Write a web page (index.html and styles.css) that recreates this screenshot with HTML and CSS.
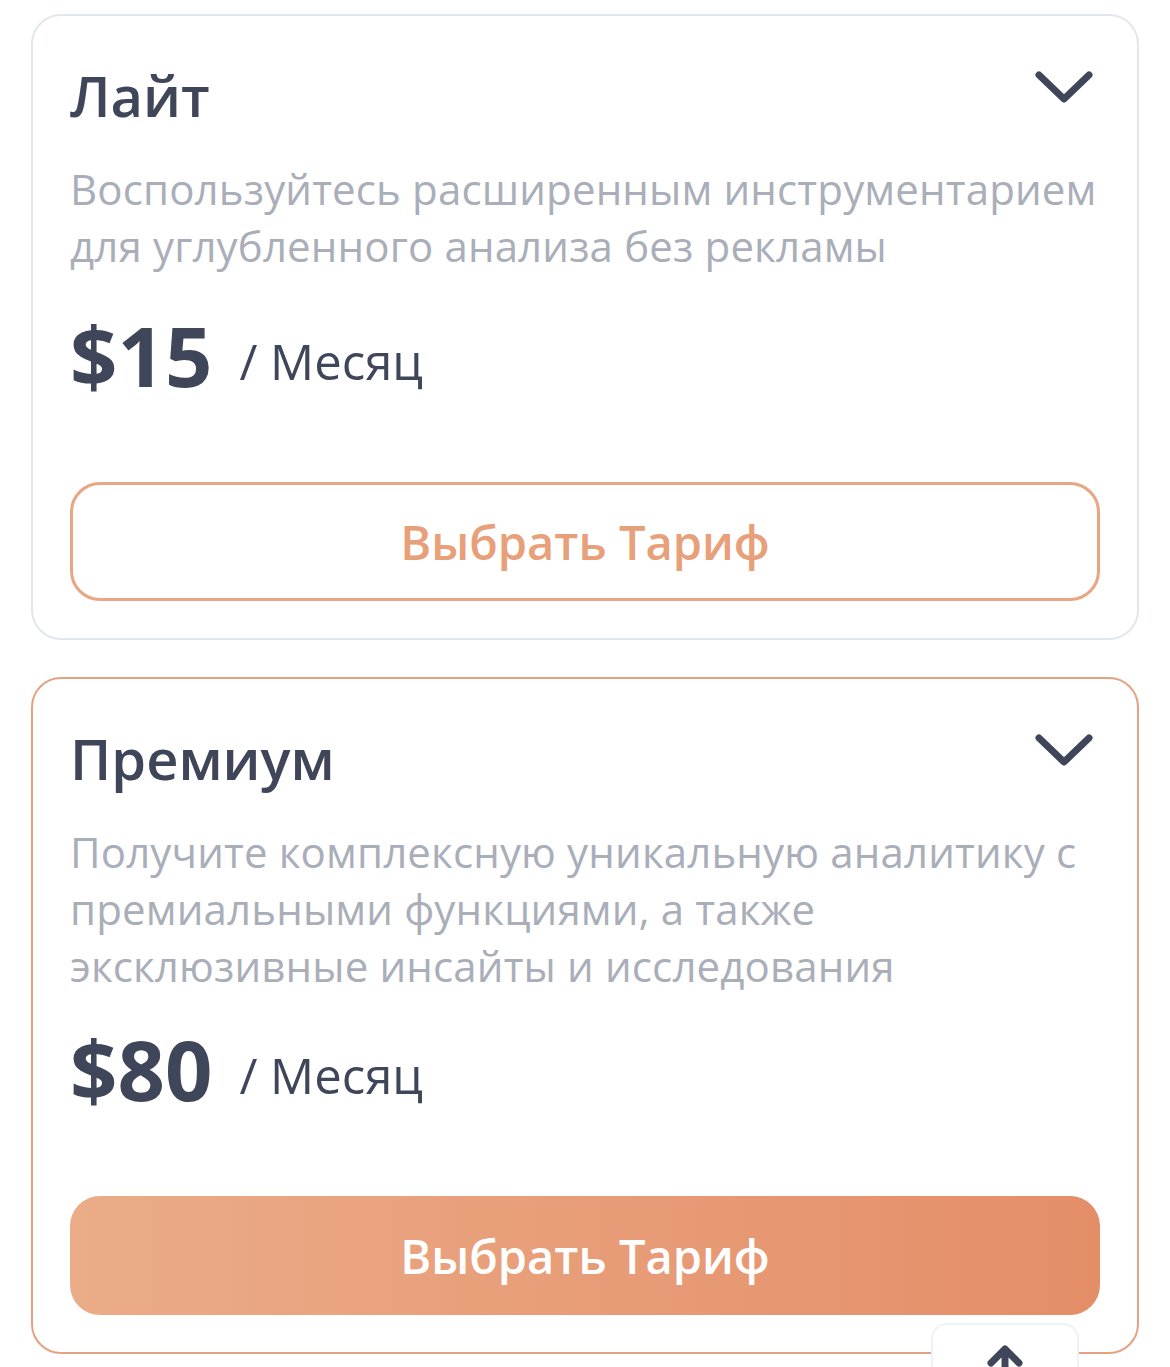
FILE: index.html
```html
<!DOCTYPE html>
<html lang="ru">
<head>
    <meta charset="UTF-8">
    <meta name="viewport" content="width=device-width, initial-scale=1.0">
    <title>Тарифы</title>
    <link rel="stylesheet" href="styles.css">
</head>
<body>
    <div class="plans">
        <div class="plan">
            <div class="plan-head">
                <h2>Лайт</h2>
                <svg class="chevron" viewBox="0 0 60 36" width="60" height="36">
                    <path d="M5 5 L30 29 L55 5" />
                </svg>
            </div>
            <p class="plan-desc">Воспользуйтесь расширенным инструментарием для углубленного анализа без рекламы</p>
            <div class="price">
                <span class="amount">$15</span>
                <span class="period">/ Месяц</span>
            </div>
            <button class="choose">Выбрать Тариф</button>
        </div>

        <div class="plan featured">
            <div class="plan-head">
                <h2>Премиум</h2>
                <svg class="chevron" viewBox="0 0 60 36" width="60" height="36">
                    <path d="M5 5 L30 29 L55 5" />
                </svg>
            </div>
            <p class="plan-desc">Получите комплексную уникальную аналитику с премиальными функциями, а также эксклюзивные инсайты и исследования</p>
            <div class="price">
                <span class="amount">$80</span>
                <span class="period">/ Месяц</span>
            </div>
            <button class="choose filled">Выбрать Тариф</button>
        </div>
    </div>

    <a class="to-top" href="#">
        <svg viewBox="0 0 40 30" width="40" height="30">
            <path d="M6 22 L20 8 L34 22 M20 8 L20 40" />
        </svg>
    </a>
</body>
</html>
```

FILE: styles.css
```css
* {
    box-sizing: border-box;
    margin: 0;
    padding: 0;
    font-family: "Open Sans", "Noto Sans", sans-serif;
}

body {
    background-color: #fff;
    color: #3f4659;
}

.plans {
    display: flex;
    flex-direction: column;
    gap: 37px;
    padding: 14px 31px;
}

.plan {
    border: 2.5px solid #e2e7ee;
    border-radius: 30px;
    padding: 41px 37px 37px;
}

.plan.featured {
    border-color: #e5a282;
}

.plan-head {
    display: flex;
    justify-content: space-between;
    align-items: flex-start;
}

.plan-head h2 {
    font-size: 56px;
    font-weight: 600;
    line-height: 76px;
}

.chevron {
    margin-top: 13px;
    margin-right: 6px;
}

.chevron path {
    fill: none;
    stroke: #3f4659;
    stroke-width: 7;
    stroke-linecap: round;
    stroke-linejoin: round;
}

.plan-desc {
    margin-top: 27px;
    font-size: 42px;
    line-height: 57px;
    letter-spacing: 0.15px;
    color: #a9aeb9;
}

.price {
    display: flex;
    align-items: center;
    gap: 27px;
    margin-top: 26px;
}

.featured .price {
    margin-top: 20px;
}

.amount {
    font-size: 83px;
    font-weight: 700;
    line-height: 109px;
}

.period {
    font-size: 49px;
    padding-top: 12px;
}

.choose {
    display: block;
    width: 100%;
    height: 119px;
    margin-top: 73px;
    border: 3px solid #e8a682;
    border-radius: 30px;
    background: #fff;
    color: #e8a07a;
    font-size: 47px;
    font-weight: 600;
    cursor: pointer;
}

.choose.filled {
    border: none;
    background: linear-gradient(90deg, #ebac88, #e48e68);
    color: #fff;
}

.to-top {
    position: fixed;
    left: 931px;
    top: 1323px;
    width: 148px;
    height: 80px;
    background: #fff;
    border: 2px solid #eef1f5;
    border-radius: 16px;
    display: flex;
    justify-content: center;
    padding-top: 16px;
}

.to-top path {
    fill: none;
    stroke: #3f4659;
    stroke-width: 7;
    stroke-linecap: round;
    stroke-linejoin: round;
}
```
